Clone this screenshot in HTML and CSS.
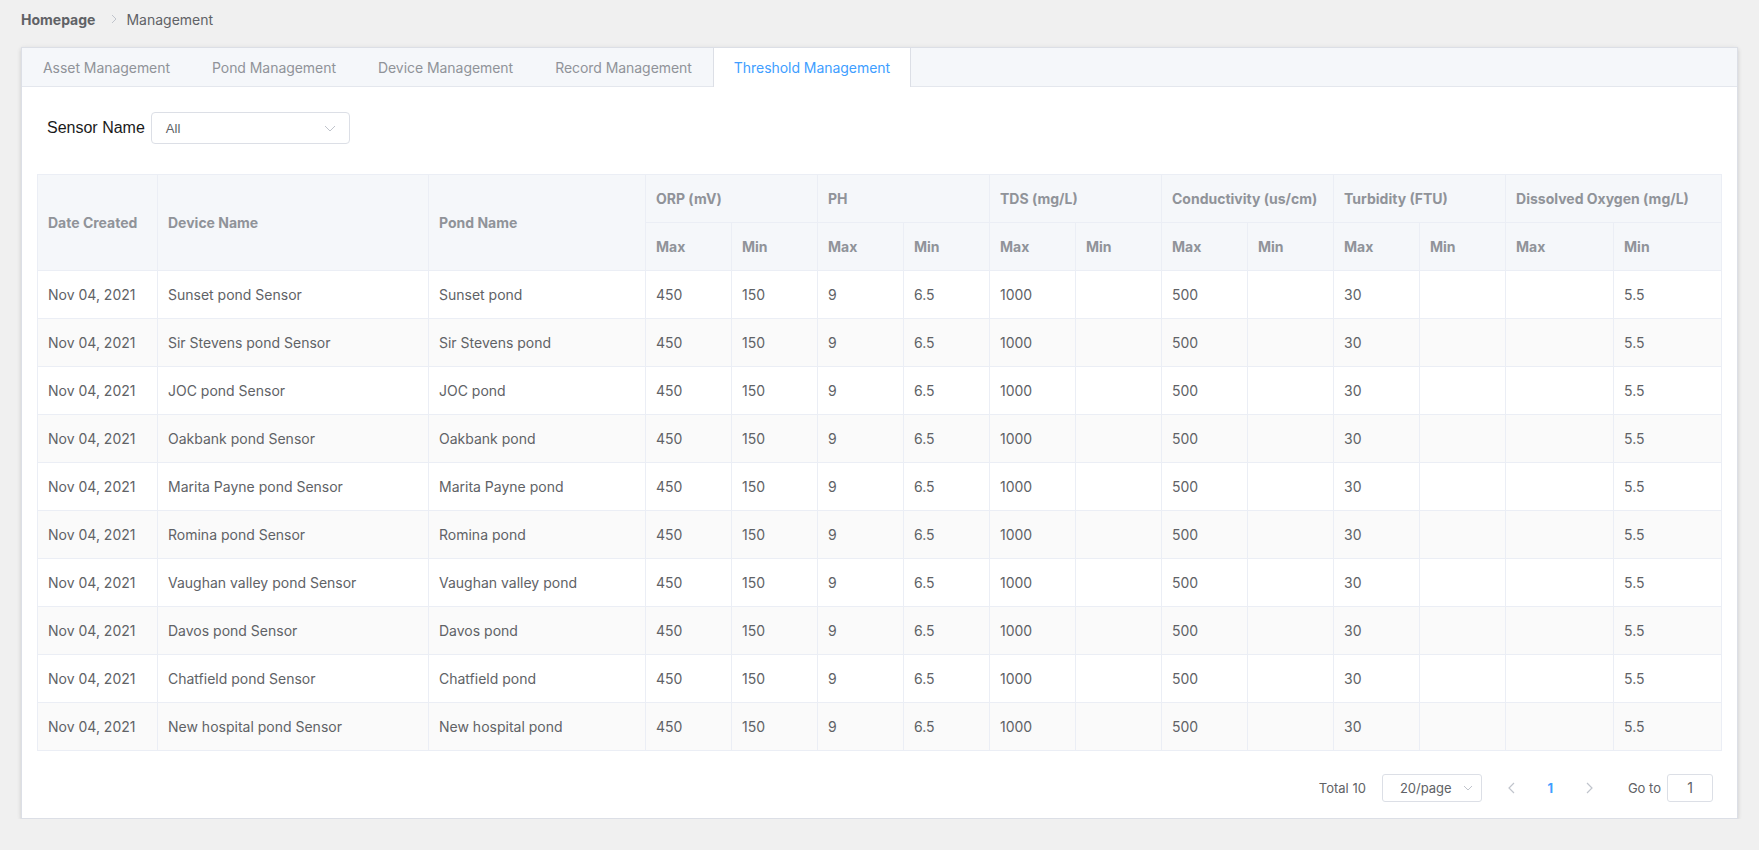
FILE: index.html
```html
<!DOCTYPE html>
<html lang="en">
<head>
<meta charset="utf-8">
<title>Threshold Management</title>
<link rel="stylesheet" href="styles.css">
</head>
<body>
<div class="page">
  <nav class="breadcrumb">
    <span class="crumb crumb-home">Homepage</span>
    <svg class="crumb-sep" width="6" height="10" viewBox="0 0 6 10"><polyline points="1,1 5,5 1,9" fill="none" stroke="#c0c4cc" stroke-width="1"/></svg>
    <span class="crumb">Management</span>
  </nav>

  <section class="card">
    <div class="tabs">
      <div class="tab">Asset Management</div>
      <div class="tab">Pond Management</div>
      <div class="tab">Device Management</div>
      <div class="tab">Record Management</div>
      <div class="tab tab-active">Threshold Management</div>
    </div>

    <div class="content">
      <div class="filter">
        <label class="filter-label">Sensor Name</label>
        <div class="select">
          <span class="select-value">All</span>
          <svg class="select-arrow" width="12" height="7" viewBox="0 0 12 7"><polyline points="1,1 6,6 11,1" fill="none" stroke="#c0c4cc" stroke-width="1"/></svg>
        </div>
      </div>

      <table class="grid">
        <colgroup>
          <col class="c-date"><col class="c-device"><col class="c-pond">
          <col class="c-num"><col class="c-num"><col class="c-num"><col class="c-num">
          <col class="c-num"><col class="c-num"><col class="c-num"><col class="c-num">
          <col class="c-num"><col class="c-num"><col class="c-do"><col class="c-do">
        </colgroup>
        <thead>
          <tr>
            <th rowspan="2">Date Created</th>
            <th rowspan="2">Device Name</th>
            <th rowspan="2">Pond Name</th>
            <th colspan="2">ORP (mV)</th>
            <th colspan="2">PH</th>
            <th colspan="2">TDS (mg/L)</th>
            <th colspan="2">Conductivity (us/cm)</th>
            <th colspan="2">Turbidity (FTU)</th>
            <th colspan="2">Dissolved Oxygen (mg/L)</th>
          </tr>
          <tr>
            <th>Max</th><th>Min</th><th>Max</th><th>Min</th><th>Max</th><th>Min</th>
            <th>Max</th><th>Min</th><th>Max</th><th>Min</th><th>Max</th><th>Min</th>
          </tr>
        </thead>
        <tbody>
          <tr><td>Nov 04, 2021</td><td>Sunset pond Sensor</td><td>Sunset pond</td><td>450</td><td>150</td><td>9</td><td>6.5</td><td>1000</td><td></td><td>500</td><td></td><td>30</td><td></td><td></td><td>5.5</td></tr>
          <tr><td>Nov 04, 2021</td><td>Sir Stevens pond Sensor</td><td>Sir Stevens pond</td><td>450</td><td>150</td><td>9</td><td>6.5</td><td>1000</td><td></td><td>500</td><td></td><td>30</td><td></td><td></td><td>5.5</td></tr>
          <tr><td>Nov 04, 2021</td><td>JOC pond Sensor</td><td>JOC pond</td><td>450</td><td>150</td><td>9</td><td>6.5</td><td>1000</td><td></td><td>500</td><td></td><td>30</td><td></td><td></td><td>5.5</td></tr>
          <tr><td>Nov 04, 2021</td><td>Oakbank pond Sensor</td><td>Oakbank pond</td><td>450</td><td>150</td><td>9</td><td>6.5</td><td>1000</td><td></td><td>500</td><td></td><td>30</td><td></td><td></td><td>5.5</td></tr>
          <tr><td>Nov 04, 2021</td><td>Marita Payne pond Sensor</td><td>Marita Payne pond</td><td>450</td><td>150</td><td>9</td><td>6.5</td><td>1000</td><td></td><td>500</td><td></td><td>30</td><td></td><td></td><td>5.5</td></tr>
          <tr><td>Nov 04, 2021</td><td>Romina pond Sensor</td><td>Romina pond</td><td>450</td><td>150</td><td>9</td><td>6.5</td><td>1000</td><td></td><td>500</td><td></td><td>30</td><td></td><td></td><td>5.5</td></tr>
          <tr><td>Nov 04, 2021</td><td>Vaughan valley pond Sensor</td><td>Vaughan valley pond</td><td>450</td><td>150</td><td>9</td><td>6.5</td><td>1000</td><td></td><td>500</td><td></td><td>30</td><td></td><td></td><td>5.5</td></tr>
          <tr><td>Nov 04, 2021</td><td>Davos pond Sensor</td><td>Davos pond</td><td>450</td><td>150</td><td>9</td><td>6.5</td><td>1000</td><td></td><td>500</td><td></td><td>30</td><td></td><td></td><td>5.5</td></tr>
          <tr><td>Nov 04, 2021</td><td>Chatfield pond Sensor</td><td>Chatfield pond</td><td>450</td><td>150</td><td>9</td><td>6.5</td><td>1000</td><td></td><td>500</td><td></td><td>30</td><td></td><td></td><td>5.5</td></tr>
          <tr><td>Nov 04, 2021</td><td>New hospital pond Sensor</td><td>New hospital pond</td><td>450</td><td>150</td><td>9</td><td>6.5</td><td>1000</td><td></td><td>500</td><td></td><td>30</td><td></td><td></td><td>5.5</td></tr>
        </tbody>
      </table>

      <div class="pagination">
        <span class="pg-total">Total 10</span>
        <div class="pg-sizes">
          <span>20/page</span>
          <svg class="pg-sizes-arrow" width="10" height="6" viewBox="0 0 10 6"><polyline points="1,1 5,5 9,1" fill="none" stroke="#c0c4cc" stroke-width="1"/></svg>
        </div>
        <button class="pg-btn" type="button"><svg width="7" height="12" viewBox="0 0 7 12"><polyline points="6,1 1,6 6,11" fill="none" stroke="#c0c4cc" stroke-width="1.2"/></svg></button>
        <span class="pg-page">1</span>
        <button class="pg-btn" type="button"><svg width="7" height="12" viewBox="0 0 7 12"><polyline points="1,1 6,6 1,11" fill="none" stroke="#c0c4cc" stroke-width="1.2"/></svg></button>
        <span class="pg-goto">Go to</span>
        <div class="pg-input">1</div>
      </div>
    </div>
  </section>
</div>
</body>
</html>
```

FILE: styles.css
```css
* { box-sizing: border-box; }

html, body {
  margin: 0;
  padding: 0;
  background: #f0f0f0;
  font-family: Inter, "Noto Sans", "Liberation Sans", sans-serif;
  color: #606266;
}

.page {
  padding: 0 21px;
}

.breadcrumb {
  height: 47px;
  display: flex;
  align-items: center;
  padding-bottom: 9px;
  font-size: 14px;
}

.crumb-home {
  font-weight: 700;
  color: #303133;
}

.crumb { color: #606266; }

.crumb-sep {
  margin: 0 9px 0 16px;
}

.card {
  background: #fff;
  border: 1px solid #dcdfe6;
  box-shadow: 0 2px 4px rgba(0, 0, 0, 0.12), 0 0 6px rgba(0, 0, 0, 0.04);
}

.tabs {
  display: flex;
  height: 39px;
  background: #f5f7fa;
  border-bottom: 1px solid #e4e7ed;
}

.tab {
  height: 39px;
  line-height: 40px;
  padding: 0 20px;
  font-size: 14px;
  letter-spacing: -0.05px;
  color: #909399;
  border-left: 1px solid transparent;
  border-right: 1px solid transparent;
  white-space: nowrap;
}

.tab-active {
  background: #fff;
  color: #409eff;
  border-left-color: #dcdfe6;
  border-right-color: #dcdfe6;
}

.content {
  padding: 25px 15px 15px;
}

.filter {
  display: flex;
  align-items: center;
  padding-left: 10px;
  margin-bottom: 30px;
}

.filter-label {
  font-family: "Liberation Sans", Arial, sans-serif;
  font-size: 16px;
  color: #1a1a1a;
  margin-right: 6px;
}

.select {
  width: 199px;
  height: 32px;
  border: 1px solid #dcdfe6;
  border-radius: 4px;
  display: flex;
  align-items: center;
  justify-content: space-between;
  padding: 0 13px 0 14px;
}

.select-value {
  font-family: "Liberation Sans", Arial, sans-serif;
  font-size: 13px;
  color: #606266;
}

.grid {
  width: 100%;
  table-layout: fixed;
  border-collapse: collapse;
  border: 1px solid #ebeef5;
  font-size: 14px;
}

.c-date { width: 120px; }
.c-device { width: 271px; }
.c-pond { width: 217px; }
.c-num { width: 86px; }
.c-do { width: 108px; }

.grid th,
.grid td {
  height: 48px;
  padding: 0 10px;
  border: 1px solid #ebeef5;
  text-align: left;
  white-space: nowrap;
  overflow: hidden;
}

.grid th {
  background: #f5f7fa;
  color: #909399;
  font-weight: 700;
}

.grid td {
  color: #606266;
}

.grid tbody tr:nth-child(even) td {
  background: #fafafa;
}

.pagination {
  display: flex;
  justify-content: flex-end;
  align-items: center;
  margin-top: 23px;
  margin-bottom: 1px;
  padding-right: 9px;
  font-size: 13px;
  color: #606266;
  height: 28px;
}

.pg-total {
  margin-right: 16px;
}

.pg-sizes {
  width: 100px;
  height: 28px;
  border: 1px solid #dcdfe6;
  border-radius: 3px;
  display: flex;
  align-items: center;
  justify-content: space-between;
  padding: 0 8px 0 17px;
  margin-right: 10px;
}

.pg-btn {
  width: 39px;
  height: 28px;
  border: 0;
  background: transparent;
  padding: 0;
  display: flex;
  align-items: center;
  justify-content: center;
}

.pg-page {
  width: 39px;
  text-align: center;
  color: #409eff;
  font-weight: 700;
}

.pg-goto {
  margin-left: 19px;
  margin-right: 6px;
}

.pg-input {
  width: 46px;
  height: 28px;
  border: 1px solid #dcdfe6;
  border-radius: 3px;
  text-align: center;
  line-height: 26px;
  font-size: 14px;
}
```
